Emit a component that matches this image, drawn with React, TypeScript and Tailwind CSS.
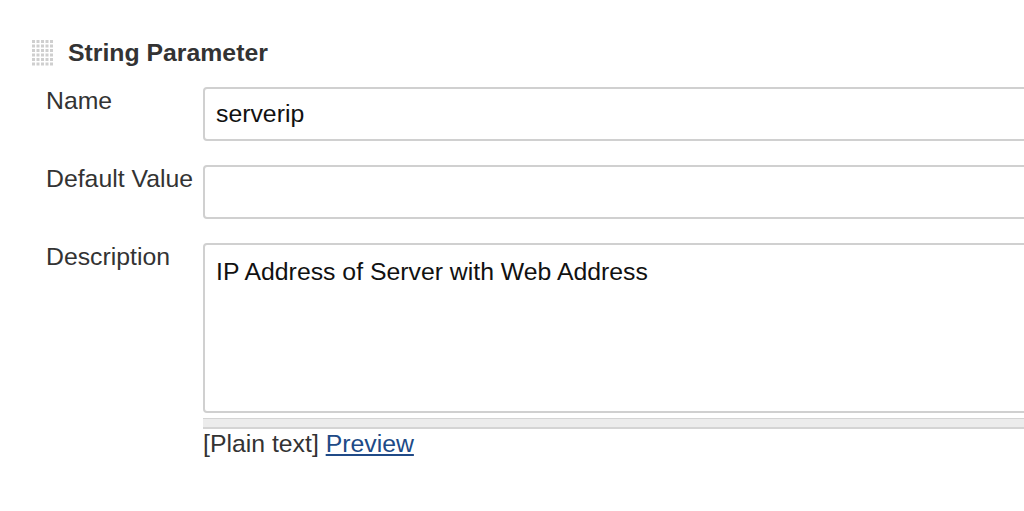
import React from 'react';

function DragHandle() {
  const dots = [];
  for (let r = 0; r < 6; r++) {
    for (let c = 0; c < 5; c++) {
      dots.push(<rect key={`${r}-${c}`} x={c * 4.5} y={r * 4.5} width="3" height="3" fill="#cfcfcf" />);
    }
  }
  return (
    <svg width="22" height="26" viewBox="0 0 22 26" className="shrink-0">
      {dots}
    </svg>
  );
}

export default function App() {
  return (
    <div className="w-[1024px] h-[511px] bg-white overflow-hidden font-['Liberation_Sans',Arial,sans-serif] text-[#333]">
      <div className="pl-[32px] pt-[40px] flex items-center gap-[14px]">
        <DragHandle />
        <h2 className="text-[24.8px] font-bold leading-[26px] text-[#333]">String Parameter</h2>
      </div>

      <div className="pl-[46px] mt-[21px] flex flex-col gap-[24px]">
        <div className="flex">
          <label className="w-[157px] shrink-0 text-[24.8px] leading-[26px] pt-[1px]">Name</label>
          <div className="w-[840px] h-[54px] shrink-0 border-2 border-[#d0d0d0] rounded-[4px] flex items-center pl-[11px] text-[24.8px] text-[#111]">
            serverip
          </div>
        </div>

        <div className="flex">
          <label className="w-[157px] shrink-0 text-[24.8px] leading-[26px] pt-[1px] whitespace-nowrap">Default Value</label>
          <div className="w-[840px] h-[54px] shrink-0 border-2 border-[#d0d0d0] rounded-[4px]" />
        </div>

        <div className="flex">
          <label className="w-[157px] shrink-0 text-[24.8px] leading-[26px] pt-[1px]">Description</label>
          <div className="flex flex-col">
            <div className="w-[840px] h-[170px] shrink-0 border-2 border-[#d0d0d0] rounded-[4px] pl-[11px] pt-[14px] text-[24.8px] leading-[26px] text-[#111]">
              IP Address of Server with Web Address
            </div>
            <div className="w-[840px] h-[11px] mt-[5px] bg-[#ececec] border-t border-b-2 border-[#d4d4d4]" />
            <div className="text-[24.8px] leading-[26px] mt-[2px]">
              [Plain text] <a className="text-[#204a87] underline">Preview</a>
            </div>
          </div>
        </div>
      </div>
    </div>
  );
}
